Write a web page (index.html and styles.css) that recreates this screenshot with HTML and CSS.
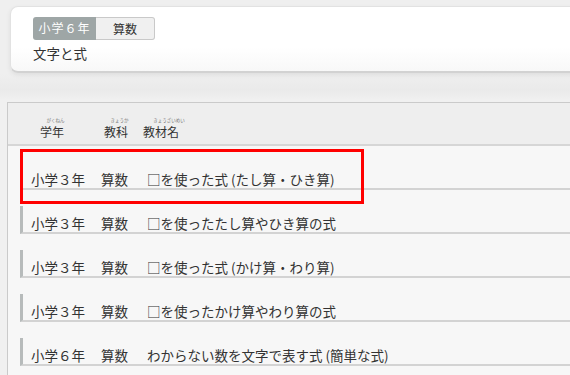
FILE: index.html
```html
<!DOCTYPE html>
<html lang="ja">
<head>
    <meta charset="UTF-8">
    <meta name="viewport" content="width=device-width, initial-scale=1.0">
    <title>文字と式</title>
    <link rel="stylesheet" href="styles.css">
</head>
<body>
    <div class="page">
        <div class="summary">
            <div class="tags">
                <span class="tag tag-grade">小学６年</span>
                <span class="tag tag-subject">算数</span>
            </div>
            <div class="unit-name">文字と式</div>
        </div>

        <div class="list-panel">
            <div class="list-head">
                <span class="col-grade label"><span class="kana">がくねん</span><span>学年</span></span>
                <span class="col-subject label"><span class="kana">きょうか</span><span>教科</span></span>
                <span class="col-title label"><span class="kana">きょうざいめい</span><span>教材名</span></span>
            </div>

            <ul class="units">
                <li class="unit-row highlight">
                    <span class="col-grade">小学３年</span>
                    <span class="col-subject">算数</span>
                    <span class="col-title">□を使った式 (たし算・ひき算)</span>
                </li>
                <li class="unit-row">
                    <span class="col-grade">小学３年</span>
                    <span class="col-subject">算数</span>
                    <span class="col-title">□を使ったたし算やひき算の式</span>
                </li>
                <li class="unit-row">
                    <span class="col-grade">小学３年</span>
                    <span class="col-subject">算数</span>
                    <span class="col-title">□を使った式 (かけ算・わり算)</span>
                </li>
                <li class="unit-row">
                    <span class="col-grade">小学３年</span>
                    <span class="col-subject">算数</span>
                    <span class="col-title">□を使ったかけ算やわり算の式</span>
                </li>
                <li class="unit-row">
                    <span class="col-grade">小学６年</span>
                    <span class="col-subject">算数</span>
                    <span class="col-title">わからない数を文字で表す式 (簡単な式)</span>
                </li>
            </ul>
        </div>
    </div>
</body>
</html>
```

FILE: styles.css
```css
* {
    margin: 0;
    padding: 0;
    box-sizing: border-box;
}

body {
    font-family: "Noto Sans CJK JP", "Noto Sans", sans-serif;
    font-size: 13px;
    color: #333;
    background: #f2f2f2;
    overflow: hidden;
}

.page {
    width: 570px;
    height: 375px;
    overflow: hidden;
    padding-top: 6px;
    background: linear-gradient(#efefef 0, #efefef 74px, #eaeaea 90px, #f0f0f0 100px);
}

/* top card */
.summary {
    margin-left: 10px;
    margin-right: -20px;
    height: 67px;
    padding: 10px 0 0 22px;
    background: linear-gradient(#fff 0, #fff 40px, #f8f8f8 100%);
    border: 1px solid #e2e2e2;
    border-bottom: 2px solid #d2d2d2;
    border-radius: 8px;
    box-shadow: 0 2px 5px rgba(0,0,0,0.07);
}

.tags {
    display: flex;
}

.tag {
    display: inline-block;
    height: 23px;
    line-height: 22px;
    font-size: 12px;
    text-align: center;
}

.tag-grade {
    width: 63px;
    background: #9ea6a6;
    color: #fff;
    border-radius: 3px 0 0 3px;
    letter-spacing: 1px;
}

.tag-subject {
    width: 59px;
    background: #f0f0f0;
    border: 1px solid #c9c9c9;
    border-left: none;
    border-radius: 0 3px 3px 0;
}

.unit-name {
    margin-top: 4px;
    font-size: 13.5px;
    line-height: 18px;
}

/* list */
.list-panel {
    margin: 29px -10px 0 7px;
    border-top: 1px solid #cacaca;
    border-left: 1px solid #cacaca;
    background: #f7f7f7;
    height: 300px;
}

.list-head {
    display: flex;
    align-items: flex-end;
    height: 43px;
    padding: 0 0 4px 32px;
    background: #eeeeee;
    border-bottom: 2px solid #d6d6d6;
    font-size: 12px;
    line-height: 16px;
}

.list-head .col-grade {
    width: 64px;
}

.list-head .col-subject {
    width: 39px;
}

.label {
    display: flex;
    flex-direction: column;
    align-items: flex-start;
}

.label .kana {
    display: block;
    width: 100%;
    height: 5px;
    font-size: 10px;
    line-height: 10px;
    color: #777;
    text-align: center;
    white-space: nowrap;
    transform: scale(0.45);
    transform-origin: center top;
    margin-bottom: 1px;
}

.col-title.label {
    align-items: flex-start;
}

.col-grade.label .kana,
.col-subject.label .kana {
    width: 24px;
}

.col-title.label .kana {
    width: 37px;
}

.units {
    list-style: none;
    padding-left: 12px;
}

.unit-row {
    position: relative;
    display: flex;
    height: 28px;
    margin-top: 16px;
    padding: 8px 0 0 8px;
    font-size: 13.5px;
    line-height: 18px;
    border-left: 3px solid #b7bbbb;
    border-bottom: 2px solid #d3d3d3;
    white-space: nowrap;
}

.unit-row .col-grade {
    width: 70px;
}

.unit-row .col-subject {
    width: 46px;
}

.highlight {
    border-left-color: #f7f7f7;
}

/* annotation frame */
.highlight::after {
    content: "";
    position: absolute;
    left: -3px;
    top: -13px;
    width: 338px;
    height: 49px;
    border: 3px solid #ff0000;
}
```
